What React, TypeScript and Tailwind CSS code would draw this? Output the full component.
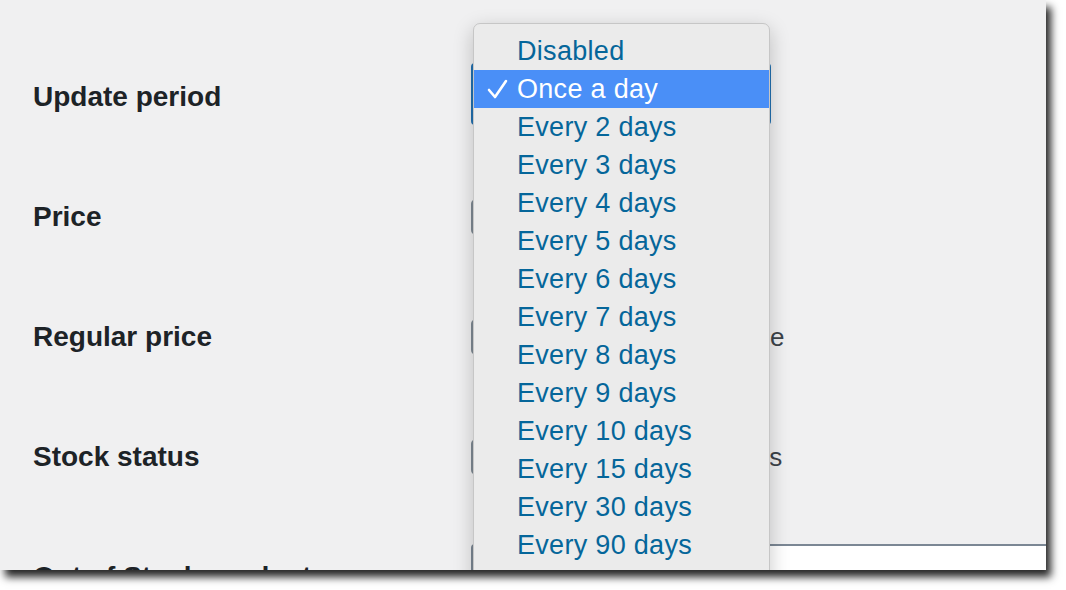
import React from "react";

const OPTIONS = [
  "Disabled",
  "Once a day",
  "Every 2 days",
  "Every 3 days",
  "Every 4 days",
  "Every 5 days",
  "Every 6 days",
  "Every 7 days",
  "Every 8 days",
  "Every 9 days",
  "Every 10 days",
  "Every 15 days",
  "Every 30 days",
  "Every 90 days",
  "Every 180 days",
];

const SELECTED = "Once a day";

function Label({ children }: { children: React.ReactNode }) {
  return (
    <div className="w-[438px] shrink-0 text-[28px] font-bold leading-none text-[#1d2327]">
      {children}
    </div>
  );
}

function CheckboxField({ text, tight }: { text: string; tight?: boolean }) {
  return (
    <div className={"flex items-center " + (tight ? "gap-[42px]" : "gap-[47px]")}>
      <span className="h-[36px] w-[36px] shrink-0 rounded-[5px] border-2 border-[#7e8993] bg-white" />
      <span className="whitespace-nowrap text-[26px] leading-none text-[#3c434a]">{text}</span>
    </div>
  );
}

export default function App() {
  return (
    <div className="h-[590px] w-[1066px] bg-white" style={{ fontFamily: '"Liberation Sans", Arial, sans-serif' }}>
      <div className="relative h-[570px] w-[1046px] overflow-hidden bg-[#f0f0f1] shadow-[5px_7px_8px_rgba(0,0,0,0.85)]">
        {/* Settings form */}
        <div className="flex flex-col pl-[33px] pt-[37px]">
          <div className="flex h-[120px] items-center">
            <Label>Update period</Label>
            <div className="-mt-[6px] h-[62px] w-[300px] rounded-[4px] border-2 border-[#2271b1] bg-white" />
          </div>
          <div className="flex h-[120px] items-center">
            <Label>Price</Label>
            <CheckboxField text="Update price" />
          </div>
          <div className="flex h-[120px] items-center">
            <Label>Regular price</Label>
            <CheckboxField text="Update regular price" tight />
          </div>
          <div className="flex h-[120px] items-center">
            <Label>Stock status</Label>
            <CheckboxField text="Update stock status" />
          </div>
          <div className="flex h-[120px] items-center">
            <Label>Out of Stock products</Label>
            <div className="h-[66px] w-[700px] shrink-0 rounded-[4px] border-2 border-[#7b8794] bg-white" />
          </div>
        </div>

        {/* Native dropdown menu, open over the form */}
        <div className="absolute left-[473px] top-[23px] w-[297px] rounded-t-[7px] border border-[#c6c6c6] bg-[#ebebeb] pt-[8px] shadow-[0_6px_20px_rgba(0,0,0,0.22)]">
          {OPTIONS.map((opt) => {
            const active = opt === SELECTED;
            return (
              <div
                key={opt}
                className={
                  "relative flex h-[38px] items-center pl-[43px] text-[27px] leading-none " +
                  (active ? "bg-[#4a8ff7] text-white" : "text-[#05669a]")
                }
              >
                {active && (
                  <svg
                    className="absolute left-[13px] top-[9px]"
                    width="21"
                    height="20"
                    viewBox="0 0 21 20"
                    fill="none"
                    stroke="white"
                    strokeWidth="2.6"
                    strokeLinecap="round"
                    strokeLinejoin="round"
                  >
                    <path d="M2 11 L8 18 L19 2" />
                  </svg>
                )}
                <span className="tracking-[0.3px]">{opt}</span>
              </div>
            );
          })}
        </div>
      </div>
    </div>
  );
}
